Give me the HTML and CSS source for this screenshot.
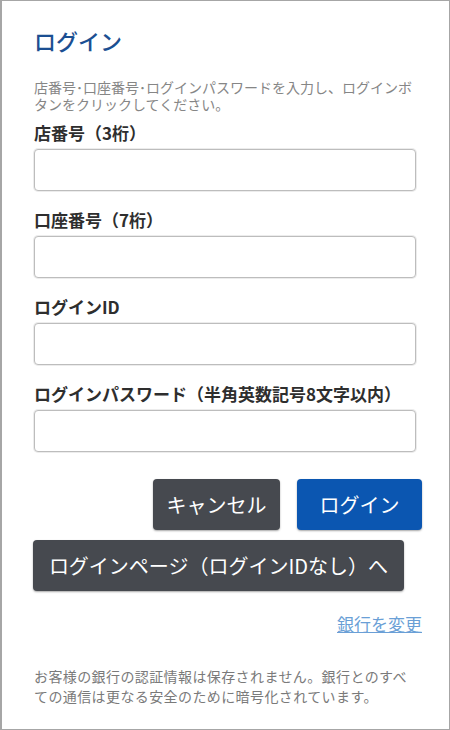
FILE: index.html
```html
<!DOCTYPE html>
<html lang="ja">
<head>
<meta charset="utf-8">
<title>ログイン</title>
<link rel="stylesheet" href="styles.css">
</head>
<body>
<div class="frame">
  <h1 class="title">ログイン</h1>
  <p class="desc">店番号･口座番号･ログインパスワードを入力し、ログインボタンをクリックしてください。</p>
  <form class="form">
    <div class="field">
      <label class="label">店番号（3桁）</label>
      <input class="input" type="text">
    </div>
    <div class="field">
      <label class="label">口座番号（7桁）</label>
      <input class="input" type="text">
    </div>
    <div class="field">
      <label class="label">ログインID</label>
      <input class="input" type="text">
    </div>
    <div class="field">
      <label class="label">ログインパスワード（半角英数記号8文字以内）</label>
      <input class="input" type="password">
    </div>
  </form>
  <div class="actions">
    <button class="btn btn-dark btn-cancel" type="button">キャンセル</button>
    <button class="btn btn-blue btn-login" type="button">ログイン</button>
  </div>
  <button class="btn btn-dark btn-wide" type="button">ログインページ（ログインIDなし）へ</button>
  <div class="link-row"><a class="link" href="#">銀行を変更</a></div>
  <p class="note">お客様の銀行の認証情報は保存されません。銀行とのすべての通信は更なる安全のために暗号化されています。</p>
</div>
</body>
</html>
```
FILE: styles.css
```css
html, body {
  margin: 0;
  padding: 0;
  background: #ffffff;
}
body {
  font-family: "Noto Sans CJK JP", "Noto Sans", "Liberation Sans", sans-serif;
  color: #333;
  text-spacing-trim: space-all;
}
.frame {
  width: 450px;
  height: 730px;
  box-sizing: border-box;
  border: 1px solid #a6a6a6;
  border-left-width: 2px;
  padding: 24px 27px 0 32px;
  background: #fff;
  overflow: hidden;
}
.title {
  margin: 0;
  font-size: 22px;
  line-height: 30px;
  font-weight: 500;
  color: #1b4f92;
}
.desc {
  margin: 24px 0 0;
  font-size: 14px;
  line-height: 17px;
  color: #868686;
}
.form {
  margin: 10px 0 0;
  display: flex;
  flex-direction: column;
  gap: 19px;
}
.field {
  display: flex;
  flex-direction: column;
  gap: 6px;
}
.label {
  font-size: 17px;
  line-height: 20px;
  font-weight: bold;
  color: #2e2e2e;
  text-spacing-trim: space-all;
}
.input {
  width: 382px;
  height: 42px;
  box-sizing: border-box;
  border: 1px solid #bdbdbd;
  border-radius: 4px;
  box-shadow: 0 0 0 1px #ececec;
  background: #fff;
  margin: 0;
  padding: 0 10px;
  font-size: 16px;
}
.actions {
  margin-top: 27px;
  display: flex;
  justify-content: flex-end;
  gap: 17px;
}
.btn {
  height: 51px;
  box-sizing: border-box;
  border: none;
  border-radius: 4px;
  color: #fff;
  font-family: "Noto Sans CJK JP", "Noto Sans", sans-serif;
  font-size: 20px;
  line-height: 51px;
  padding: 0;
  box-shadow: 0 1px 2px rgba(0, 0, 0, 0.35);
  text-spacing-trim: space-all;
}
.btn-dark {
  background: #46494f;
}
.btn-blue {
  background: #0b56b1;
}
.btn-cancel {
  width: 127px;
}
.btn-login {
  width: 125px;
}
.btn-wide {
  display: block;
  margin-top: 10px;
  width: 371px;
  margin-left: -1px;
  white-space: nowrap;
}
.link-row {
  margin-top: 22px;
  text-align: right;
  line-height: 22px;
}
.link {
  font-size: 17px;
  color: #6a9fd6;
  text-decoration: underline;
}
.note {
  margin: 31px 0 0;
  max-width: 380px;
  font-size: 14px;
  letter-spacing: 0.4px;
  line-height: 20px;
  color: #7a7a7a;
}
```
